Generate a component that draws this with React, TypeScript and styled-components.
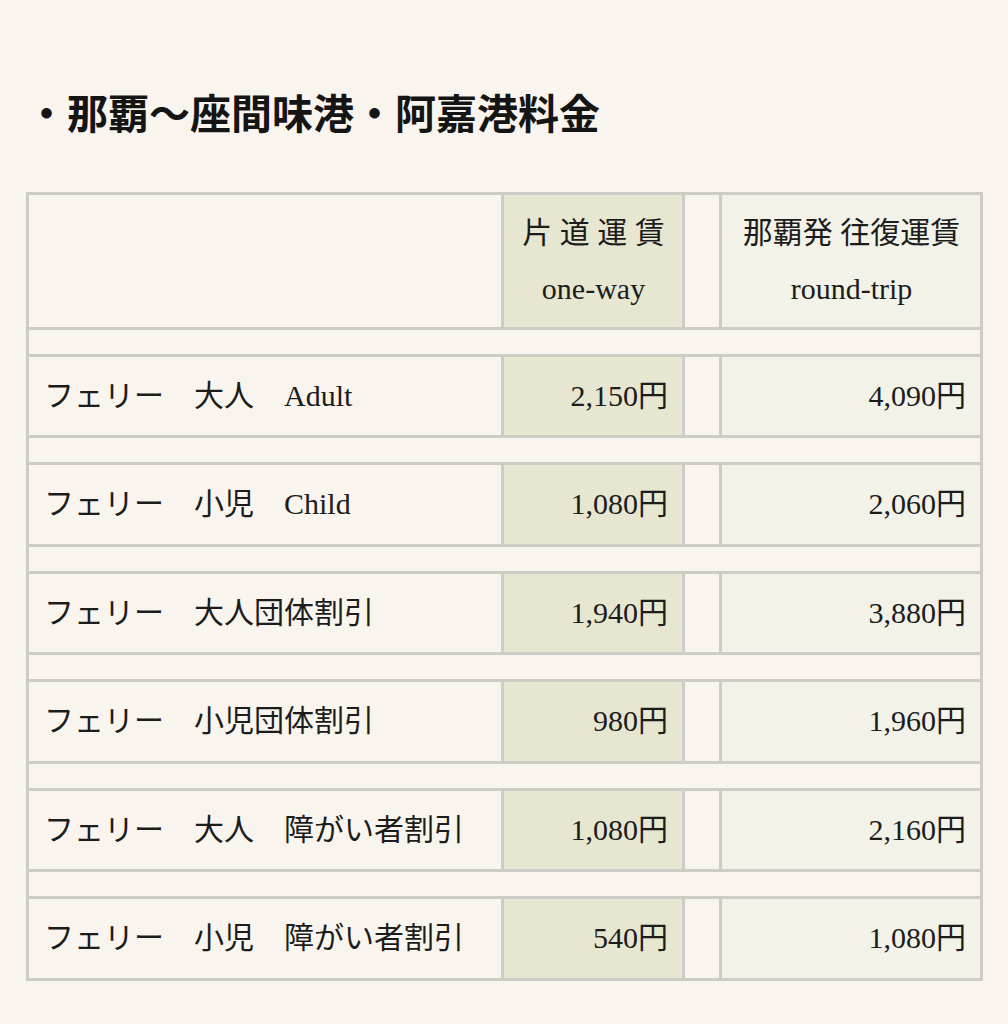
import React from 'react';
import styled, { createGlobalStyle } from 'styled-components';

const GlobalStyle = createGlobalStyle`
  html, body {
    margin: 0;
    padding: 0;
    background: #f9f4ee;
  }

  body {
    font-family: 'Liberation Serif', 'Noto Sans CJK JP', serif;
    color: #1c1c1c;
  }
`;

const Page = styled.main`
  padding: 85px 25px 40px 26px;
`;

const Title = styled.h2`
  margin: 0 0 47px;
  font-size: 41px;
  line-height: 60px;
  font-weight: 700;
  color: #151515;
`;

const FareTable = styled.table`
  width: 957px;
  border-collapse: collapse;
  table-layout: fixed;
  border: 3px solid #cfcbc5;
  font-size: 30px;
  line-height: 56px;
`;

type Tone = 'plain' | 'green' | 'light';

const tones: Record<Tone, string> = {
  plain: '#f9f4ee',
  green: '#e7e6d1',
  light: '#f3f2e9',
};

const Cell = styled.td<{ $tone?: Tone; $align?: 'left' | 'right' | 'center' }>`
  border: 3px solid #cfcbc5;
  padding: 11px 14px 11.6px 15px;
  background: ${({ $tone = 'plain' }) => tones[$tone]};
  text-align: ${({ $align = 'left' }) => $align};
  white-space: nowrap;
`;

const HeadCell = styled(Cell)`
  padding-top: 9.5px;
  padding-bottom: 10px;
  font-weight: 400;
`;

const Gap = styled.td`
  border: 3px solid #cfcbc5;
  padding: 0;
  height: 24px;
  background: #f9f4ee;
`;

type Fare = { label: string; oneWay: string; round: string };

const fares: Fare[] = [
  { label: 'フェリー　大人　Adult', oneWay: '2,150円', round: '4,090円' },
  { label: 'フェリー　小児　Child', oneWay: '1,080円', round: '2,060円' },
  { label: 'フェリー　大人団体割引', oneWay: '1,940円', round: '3,880円' },
  { label: 'フェリー　小児団体割引', oneWay: '980円', round: '1,960円' },
  { label: 'フェリー　大人　障がい者割引', oneWay: '1,080円', round: '2,160円' },
  { label: 'フェリー　小児　障がい者割引', oneWay: '540円', round: '1,080円' },
];

export default function App() {
  return (
    <>
      <GlobalStyle />
      <Page>
        <Title>・那覇〜座間味港・阿嘉港料金</Title>
        <FareTable>
          <colgroup>
            <col style={{ width: 475 }} />
            <col style={{ width: 181 }} />
            <col style={{ width: 37 }} />
            <col style={{ width: 261 }} />
          </colgroup>
          <tbody>
            <tr>
              <HeadCell as="th" />
              <HeadCell as="th" $tone="green" $align="center">
                片 道 運 賃
                <br />
                one-way
              </HeadCell>
              <HeadCell as="th" />
              <HeadCell as="th" $tone="light" $align="center">
                那覇発 往復運賃
                <br />
                round-trip
              </HeadCell>
            </tr>
            {fares.map((fare) => (
              <React.Fragment key={fare.label}>
                <tr>
                  <Gap colSpan={4} />
                </tr>
                <tr>
                  <Cell>{fare.label}</Cell>
                  <Cell $tone="green" $align="right">
                    {fare.oneWay}
                  </Cell>
                  <Cell />
                  <Cell $tone="light" $align="right">
                    {fare.round}
                  </Cell>
                </tr>
              </React.Fragment>
            ))}
          </tbody>
        </FareTable>
      </Page>
    </>
  );
}
